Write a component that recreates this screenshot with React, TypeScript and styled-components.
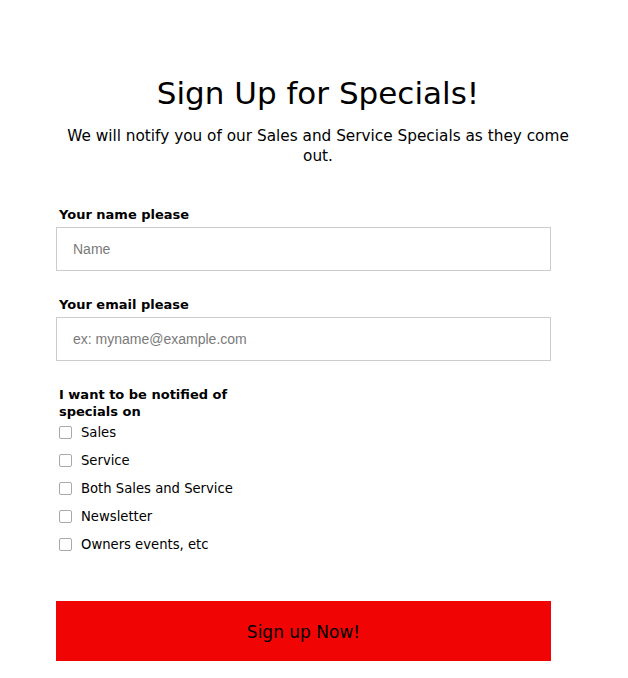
import React from "react";
import styled, { createGlobalStyle } from "styled-components";

const GlobalStyle = createGlobalStyle`
  html, body {
    margin: 0;
    padding: 0;
    background: #ffffff;
  }
  body {
    font-family: "DejaVu Sans", Verdana, sans-serif;
    color: #000;
  }
`;

const Page = styled.div`
  width: 628px;
  padding: 74px 48px 0 56px;
  box-sizing: border-box;
`;

const Header = styled.header`
  text-align: center;
  margin-bottom: 40px;
`;

const Title = styled.h1`
  font-size: 31px;
  font-weight: normal;
  margin: 0 0 14px;
  line-height: 38px;
`;

const Subtitle = styled.p`
  font-size: 15.3px;
  line-height: 20px;
  margin: 0;
`;

const Form = styled.form`
  display: flex;
  flex-direction: column;
  width: 495px;
`;

const Field = styled.div<{ last?: boolean }>`
  display: flex;
  flex-direction: column;
  margin-bottom: ${(p) => (p.last ? "0" : "25px")};
`;

const Label = styled.label<{ narrow?: boolean }>`
  font-size: 13px;
  font-weight: bold;
  line-height: 17px;
  padding-left: 3px;
  margin-bottom: 4px;
  width: ${(p) => (p.narrow ? "180px" : "auto")};
`;

const TextInput = styled.input`
  height: 44px;
  box-sizing: border-box;
  border: 1px solid #cccccc;
  padding: 0 16px;
  font-family: "Liberation Sans", Arial, sans-serif;
  font-size: 14px;
  outline: none;
  &::placeholder {
    color: #7a7a7a;
  }
`;

const CheckList = styled.div`
  display: flex;
  flex-direction: column;
  margin-top: -6px;
`;

const CheckRow = styled.label`
  display: flex;
  align-items: center;
  height: 28px;
  font-size: 13.2px;
  padding-left: 3px;
`;

const Box = styled.span`
  width: 11px;
  height: 11px;
  border: 1px solid #a9a9a9;
  border-radius: 2px;
  margin-right: 9px;
  background: #fff;
`;

const Button = styled.button`
  margin-top: 43px;
  height: 60px;
  width: 495px;
  border: none;
  background: #f10404;
  color: #000;
  font-family: "DejaVu Sans", Verdana, sans-serif;
  font-size: 17px;
  padding-top: 2px;
  cursor: pointer;
`;

const options = [
  "Sales",
  "Service",
  "Both Sales and Service",
  "Newsletter",
  "Owners events, etc",
];

export default function App() {
  return (
    <>
      <GlobalStyle />
      <Page>
        <Header>
          <Title>Sign Up for Specials!</Title>
          <Subtitle>
            We will notify you of our Sales and Service Specials as they come
            out.
          </Subtitle>
        </Header>
        <Form onSubmit={(e) => e.preventDefault()}>
          <Field>
            <Label>Your name please</Label>
            <TextInput placeholder="Name" />
          </Field>
          <Field>
            <Label>Your email please</Label>
            <TextInput placeholder="ex: myname@example.com" />
          </Field>
          <Field last>
            <Label narrow>I want to be notified of specials on</Label>
            <CheckList>
              {options.map((o) => (
                <CheckRow key={o}>
                  <Box />
                  {o}
                </CheckRow>
              ))}
            </CheckList>
          </Field>
          <Button type="submit">Sign up Now!</Button>
        </Form>
      </Page>
    </>
  );
}
